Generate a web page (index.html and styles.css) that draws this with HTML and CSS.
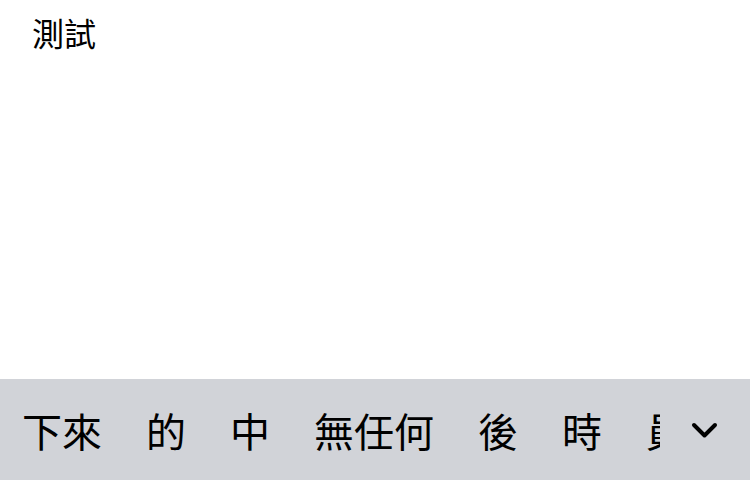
FILE: index.html
```html
<!DOCTYPE html>
<html lang="zh-Hant">
<head>
<meta charset="utf-8">
<link rel="stylesheet" href="styles.css">
</head>
<body>
<div class="page">
  <div class="input-text">測試</div>
  <div class="candidate-bar">
    <div class="candidates">
      <span class="cand">下來</span>
      <span class="cand">的</span>
      <span class="cand">中</span>
      <span class="cand">無任何</span>
      <span class="cand">後</span>
      <span class="cand">時</span>
      <span class="cand">員</span>
    </div>
    <div class="expand">
      <svg width="28" height="20" viewBox="0 0 28 20" aria-hidden="true">
        <polyline points="3,5 13.5,15.5 24,5" fill="none" stroke="#000" stroke-width="4" stroke-linecap="round" stroke-linejoin="round"/>
      </svg>
    </div>
  </div>
</div>
</body>
</html>
```
FILE: styles.css
```css
html, body {
  margin: 0;
  padding: 0;
  background: #ffffff;
}
.page {
  height: 100vh;
  display: flex;
  flex-direction: column;
  font-family: "Noto Sans CJK TC", "Noto Sans CJK SC", sans-serif;
  color: #000;
}
.input-text {
  font-size: 32px;
  line-height: 32px;
  padding: 16px 0 0 32px;
}
.candidate-bar {
  margin-top: auto;
  height: 101px;
  background: #d1d3d8;
  display: flex;
  align-items: stretch;
}
.candidates {
  flex: 1;
  min-width: 0;
  overflow: hidden;
  white-space: nowrap;
  display: flex;
  align-items: center;
}
.cand {
  flex: none;
  font-size: 40px;
  line-height: 58px;
  padding: 0 22px;
}
.expand {
  flex: none;
  width: 90px;
  display: flex;
  align-items: center;
  justify-content: center;
}
.expand svg {
  display: block;
}
```
